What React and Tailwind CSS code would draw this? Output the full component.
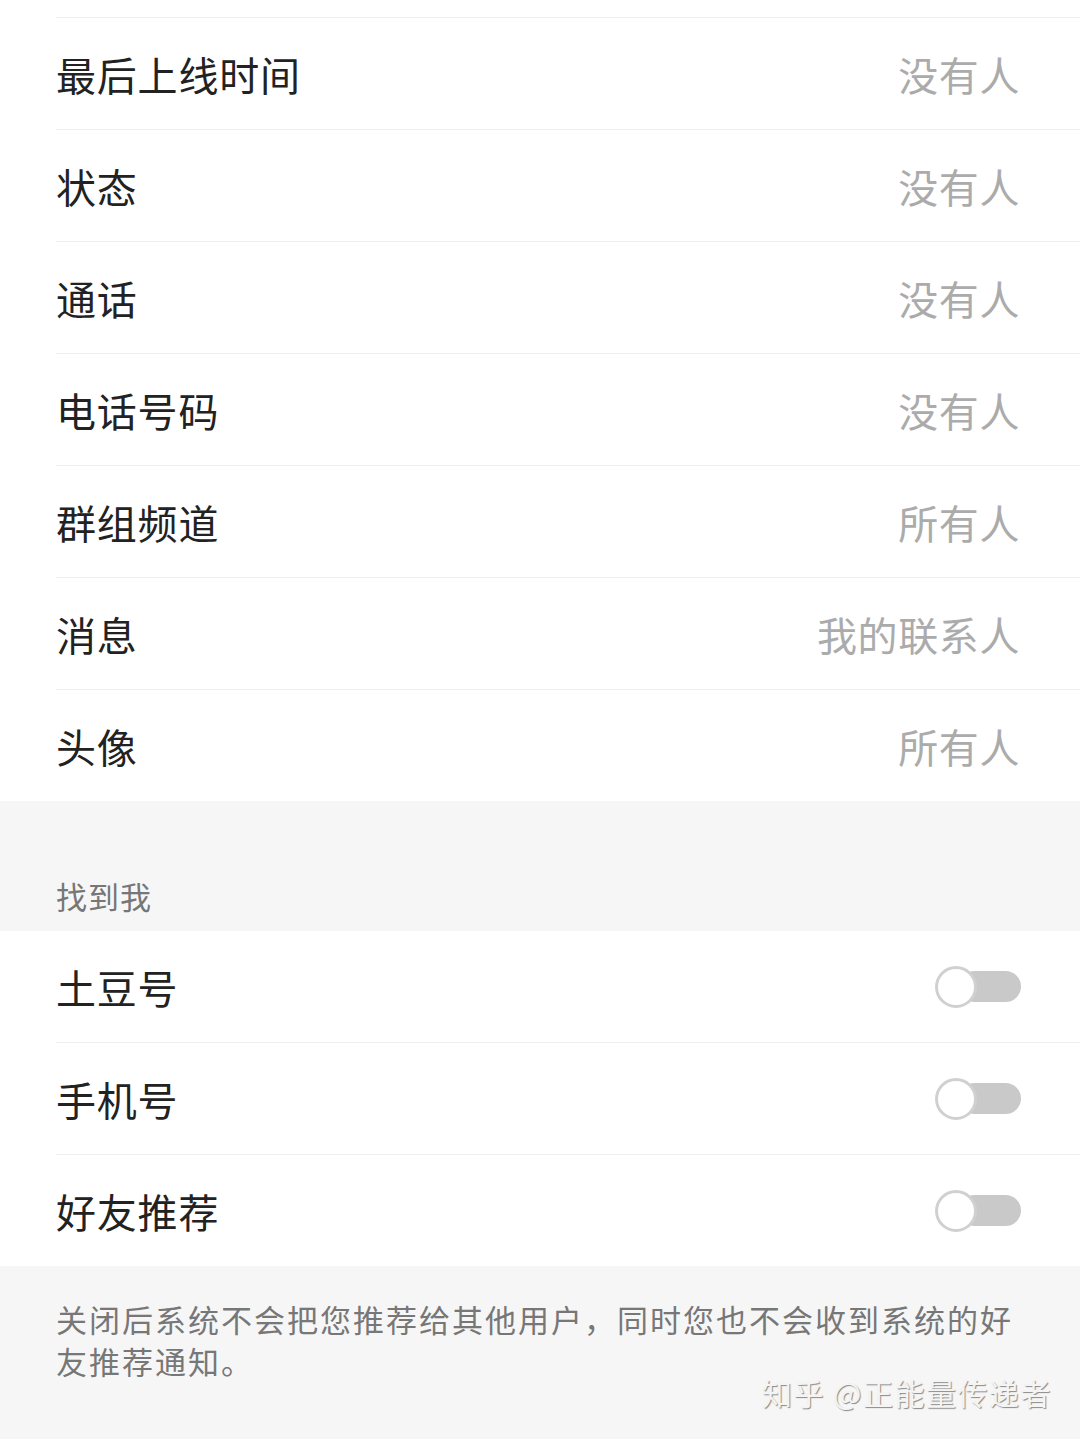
const font = { fontFamily: '"Noto Sans CJK SC", "Noto Sans", sans-serif' };

const privacyRows = [
  { label: '最后上线时间', value: '没有人' },
  { label: '状态', value: '没有人' },
  { label: '通话', value: '没有人' },
  { label: '电话号码', value: '没有人' },
  { label: '群组频道', value: '所有人' },
  { label: '消息', value: '我的联系人' },
  { label: '头像', value: '所有人' },
];

const findRows = ['土豆号', '手机号', '好友推荐'];

function Divider() {
  return <div className="ml-[56px] h-px bg-[#efefef]" />;
}

function Toggle() {
  return (
    <div className="relative w-[86px] h-[42px] flex items-center">
      <div className="absolute left-[24px] right-0 h-[31px] rounded-full bg-[#c9c9c9]" />
      <div className="relative w-[42px] h-[42px] rounded-full bg-white border-[3px] border-[#d0d0d0]" />
    </div>
  );
}

export default function App() {
  return (
    <div className="w-[1080px] h-[1439px] bg-white flex flex-col overflow-hidden" style={font}>
      <div className="h-[17px] bg-white" />
      <Divider />

      <div className="flex flex-col">
        {privacyRows.map((row, i) => (
          <div key={row.label}>
            <div className="h-[111px] flex items-center justify-between pl-[56px] pr-[60px]">
              <span className="text-[40px] tracking-[0.8px] text-[#222222] leading-none">{row.label}</span>
              <span className="text-[40px] tracking-[0.6px] text-[#ababab] leading-none">{row.value}</span>
            </div>
            {i < privacyRows.length - 1 && <Divider />}
          </div>
        ))}
      </div>

      <div className="h-[130px] bg-[#f6f6f6] pl-[56px] pt-[73px]">
        <div className="text-[31px] leading-[44px] tracking-[1px] text-[#777777]">找到我</div>
      </div>

      <div className="flex flex-col">
        {findRows.map((label, i) => (
          <div key={label}>
            <div className="h-[111px] flex items-center justify-between pl-[56px] pr-[59px]">
              <span className="text-[40px] tracking-[0.8px] text-[#222222] leading-none">{label}</span>
              <Toggle />
            </div>
            {i < findRows.length - 1 && <Divider />}
          </div>
        ))}
      </div>

      <div className="relative flex-1 bg-[#f6f6f6] pl-[56px] pr-[50px] pt-[32px]">
        <p className="text-[31px] leading-[42px] tracking-[2px] text-[#777777]">
          关闭后系统不会把您推荐给其他用户，同时您也不会收到系统的好友推荐通知。
        </p>
        <div className="absolute right-[28px] top-[108px] text-[30px] leading-[36px] tracking-[1.5px] text-[#f4f4f4] [text-shadow:1px_1px_1px_#8a8a8a]">
          知乎 @正能量传递者
        </div>
      </div>
    </div>
  );
}
